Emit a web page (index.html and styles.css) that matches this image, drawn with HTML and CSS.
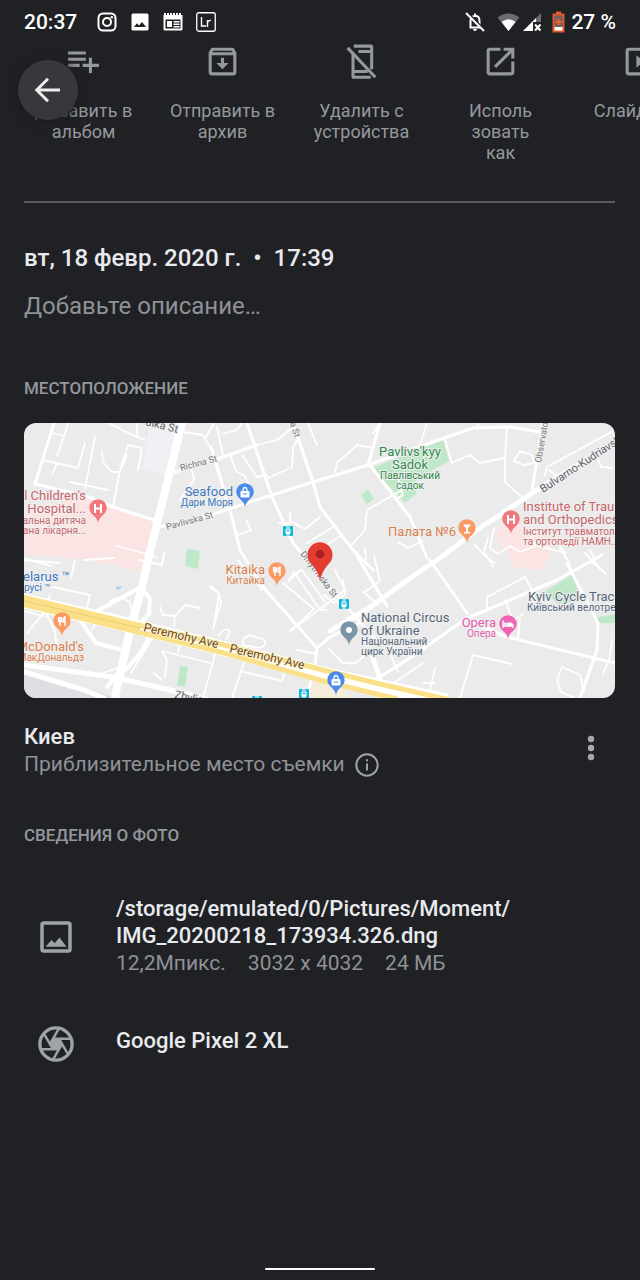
FILE: index.html
```html
<!DOCTYPE html>
<html lang="ru">
<head>
<meta charset="utf-8">
<meta name="viewport" content="width=device-width, initial-scale=1">
<title>Сведения о фото</title>
<link rel="stylesheet" href="styles.css">
</head>
<body>
<div class="screen">
  <header class="status">
    <span class="clock">20:37</span>
    <div class="notices">
      <svg class="s20" viewBox="0 0 20 20"><rect x="1.5" y="1.5" width="17" height="17" rx="4.5" fill="none" stroke="#fff" stroke-width="2"/><circle cx="10" cy="10" r="4" fill="none" stroke="#fff" stroke-width="2"/><circle cx="14.8" cy="5.2" r="1.3" fill="#fff"/></svg>
      <svg class="s20" viewBox="0 0 20 20"><path fill="#fff" fill-rule="evenodd" d="M3 1.500h14q1.500 0 1.500 1.500v14q0 1.500-1.500 1.500H3q-1.500 0-1.500-1.500V3q0-1.500 1.500-1.500zM4 15h12l-4-5-3 3.500-2-2.300z"/></svg>
      <svg class="s20" viewBox="0 0 20 20"><path fill="#fff" fill-rule="evenodd" d="M.5 3h19v14q0 1.500-1.500 1.500H2q-1.500 0-1.500-1.500zM2.500 7.500v9h15v-9z"/><path d="M1 2h18" stroke="#fff" stroke-width="2" stroke-dasharray="2 1"/><path fill="#fff" d="M4 9h5v6H4zM10.500 9h6v1.500h-6zM10.500 11.500h6V13h-6zM10.500 14h6v1.500h-6z"/></svg>
      <svg class="s20" viewBox="0 0 20 20"><rect x=".75" y=".75" width="18.500" height="18.500" rx="2" fill="none" stroke="#fff" stroke-width="1.300"/><path d="M5.500 5v9H10M11.500 15V8M11.500 10.500Q12.500 8 15 8.500" fill="none" stroke="#fff" stroke-width="1.400"/></svg>
    </div>
    <div class="system">
      <svg class="s20 bell" viewBox="0 0 20 20"><path d="M4.500 15.500h11M5.500 15V9Q5.500 4.500 10 4t4.500 5v6" fill="none" stroke="#fff" stroke-width="2"/><path d="M9 1.500h2V4H9zM8 17h4q-.3 2-2 2t-2-2z" fill="#fff"/><path d="M2.500.5l17 17.500" stroke="#202125" stroke-width="2"/><path d="M1 1l18 18" stroke="#fff" stroke-width="2"/></svg>
      <svg class="wifi" viewBox="0 0 23 20"><path d="M.5 5.500Q11.500-2.500 22.500 5.500L11.500 19z" fill="#6b6c6f"/><path d="M4.500 10Q11.500 4.500 18.500 10l-7 9z" fill="#fff"/></svg>
      <svg class="s20" viewBox="0 0 20 20"><path d="M19 1v18H1z" fill="#6b6c6f"/><path d="M14 6v5h-2v8H1z" fill="#fff"/><path d="M11 10h9v10h-9z" fill="#202125"/><path d="M13 12.500l5.500 6M18.500 12.500l-5.500 6" stroke="#fff" stroke-width="2"/></svg>
      <svg class="battery" viewBox="0 0 13 22"><path d="M4 .5h5v2h3.500V21.500H.5V2.500H4z" fill="#e2592f"/><path d="M2.500 4.500h8V16h-8z" fill="#6f6260"/><path d="M2.500 16h8v3.500h-8z" fill="#fff"/><path d="M6.500 8v6M3.500 11h6" stroke="#f0622f" stroke-width="2"/></svg>
      <span class="charge">27&nbsp;%</span>
    </div>
  </header>

  <button class="back" aria-label="Назад"><svg viewBox="0 0 24 24"><path d="M20 12H5M12 4.500L4.500 12l7.500 7.500" fill="none" stroke="#eceded" stroke-width="2"/></svg></button>

  <nav class="actions">
    <button class="action"><svg viewBox="0 0 24 24"><path fill="currentColor" d="M13.500 9.500H2v2h11.500zM13.500 5.500H2v2h11.500zM17.500 13.500v-4h-2v4h-4v2h4v4h2v-4h4.500v-2zM2 15.500h7.500v-2H2z"/></svg><span>Добавить в<br>альбом</span></button>
    <button class="action"><svg viewBox="0 0 24 24"><path fill="none" stroke="currentColor" stroke-width="2" stroke-linejoin="round" d="M4 6.500V19q0 1 1 1h14q1 0 1-1V6.500L18.500 4h-13zM4 7h16"/><path fill="currentColor" d="M11 9.500h2V13h3l-4 4-4-4h3z"/></svg><span>Отправить в<br>архив</span></button>
    <button class="action"><svg viewBox="0 0 24 24"><path fill="none" stroke="currentColor" stroke-width="2" d="M7 2h11q.6 0 .6.6V17M10 5.500h8M6.500 7v14.500q0 .7.7.7H18M7 18.500h9"/><path stroke="currentColor" stroke-width="2" d="M3 3.200l18 19"/></svg><span>Удалить с<br>устройства</span></button>
    <button class="action"><svg viewBox="0 0 24 24"><path fill="currentColor" d="M19 19H5V5h7V3H5a2 2 0 0 0-2 2v14a2 2 0 0 0 2 2h14c1.100 0 2-.9 2-2v-7h-2v7zM14 3v2h3.590l-9.830 9.830 1.410 1.410L19 6.410V10h2V3h-7z"/></svg><span>Исполь<br>зовать<br>как</span></button>
    <button class="action"><svg viewBox="0 0 24 24"><path fill="none" stroke="currentColor" stroke-width="2" d="M5 4h14q1 0 1 1v14q0 1-1 1H5q-1 0-1-1V5q0-1 1-1z"/><path fill="currentColor" d="M10 8v8l5-4z"/></svg><span>Слайд-шоу</span></button>
  </nav>

  <main class="details">
    <hr class="rule">
    <h1 class="date">вт, 18 февр. 2020 г. &nbsp;•&nbsp; 17:39</h1>
    <input class="description" type="text" placeholder="Добавьте описание…" aria-label="Описание">

    <h2 class="section">МЕСТОПОЛОЖЕНИЕ</h2>
    <svg class="map" viewBox="24 423 591 275" role="img" aria-label="Карта: Киев">
      <rect x="24" y="423" width="591" height="275" fill="#ebebec"/>
      <path fill="#f0f1f4" d="M150 423h28l-12 52-23-5z"/>
      <path fill="#fbe5e4" d="M24 512l62-16 70 25-10 53-34-9-48-8-40-3zM492 532l20-12 20 12 20 6-2 18-8 14-28-2-6-16z"/>
      <path fill="#bfe8c8" d="M372 468l71-28 6 21-32 18-6 6 6 8-12 10zM545 591l27-16 9 24-22 6zM594 618l21-4v9l-17 0zM361 495l7-6 6 10-7 5zM187 549l13 2-2 18-13-3zM180 666l8 1-3 20-8-2z"/>
      <path fill="#dddfe2" d="M24 674l76 18 14 6H24z"/>
      <path fill="#f5edda" d="M312 684l20-5 20 19h-43z"/>
      <path fill="#a8cff5" d="M116 587l6-1-2 3-4 1z"/>
      <g fill="none" stroke="#fff" stroke-linejoin="round" stroke-linecap="round">
        <g stroke-width="1.800">
          <path d="M43 460l35 8 7-25M52 433l12 3 4-13M64 436l-7 20M53 473l4-10M95 437l-10 51M70 482l38 8M113 507l7-37 8-25 14 3-4 22M102 452l1 10 9 10h8M127 455l-5 12M108 423l29 14v-14M137 437l8 3M183 432l20 3 14 25M206 437l8-14M192 470l2 10-6 8-8 12M117 546l30 8 10 4"/>
          <path d="M217 427l6 28M223 434l14-4 5-7M230 455l6 16 9 5 5 12M268 478l24-11 1-20 6-10M257 445l20-5 15-12M242 455l15 22 10-2M284 420l13 3M308 423l9 22M335 472l2-9 20-18 16 3M380 423l-7 10"/>
          <path d="M238 535l13-5-5-10M279 523h11l0-10M290 521l15 8 15-12M307 543l26-16M314 553l28-18M366 560l-1-12M350 547l15-17 2-20 40-23M395 500l8-5-6-20M398 542l10 6 15-7"/>
          <path d="M445 440l7 23 18-8 10 8 25-5 2-31M505 458v24l18 16M514 461l10 4 10-2-2-8-12-4zM545 475l2-8 66-36M597 457l4 10 11 1M480 415l-3 14M427 423l-7 22M549 470l10 8"/>
          <path d="M488 538l-4 14 9 14M494 528l-4 20 8 6 12-8 10 6 15-6-4-10M535 545l30 8M565 553l-10-14M475 545l12 13 8 5M585 553l20 20M560 548l10 16"/>
          <path d="M487 610v-13l38-20 7 13M505 600l8 20 10-6M520 619l-2 20M460 698l13-43 39 9M435 668l-7 30M423 683h12M562 667l18 8 4 16M562 667l-5 13 4 12 14 6M612 640l-3 20-6 14M590 560l16 14M595 560l-5-10"/>
          <path d="M53 587l37 8-3 12M50 595l-5 16 10 20 2 18M45 611l-18 22M24 611l20 5M52 566l-30-8M84 560l30-2M160 607l3 8 12 1 10-11 15 3M175 616l-1 10M211 586l8 8-5 30M215 655l-12 43M178 653l2-9M165 677l2-17-5-9 48 12M153 637l-22 36M24 560l36 3M140 560l22 5 2-12M75 560l-4 18M162 680l-8-7"/>
          <path d="M210 588l8 4 3 10-8 27M290 580l10-10M288 582l6-10 26 38 6 0M302 570l23 32M312 569l28 36M283 583l31 26-24 22M292 630l53-40-10-20M324 595l10 8 11-9-2-14M297 650l20 4M240 671l42 10 3-10M232 698l12-35M243 640q4-6 10-4l12 4q2 6-6 8l-16-3zM219 635q5-8 11-4l-3 8M328 648l15 15 12 0 17-12M363 593l17-12-6-25M376 603l-11-10M238 560l24 30"/>
          <path d="M110 601q10-6 18 0 6 6 2 16l-4 10M92 630q2-8 12-6l22 8M91 634l5 8 27 8-3 20M103 673l18-6M118 690l3-20M384 640l14 32M395 682l28-19"/>
        </g>
        <g stroke-width="3">
          <path d="M54 423L35 484l51 12 27 11 44 14M175 472l45-14 37-13M247 423l25 74 21 46 51 61 35 39M293 423l20 59 7 25 33 43 20 20M211 447l19 63 10 40 23 37 54 61M155 528l55-13 103-33 55-17 79-28 26-9 37-1 30 5M368 465l12-42M370 465l40 52 17 41M357 556l30 50M430 560l37 53M567 563l31 60-1 27-17 48M467 620l40 17 108 26M375 680l35-22 57-40 20-8 70-30 45-25M543 423l-11 67M317 648l-3 24-8 26M317 648l13-11 30-14"/>
        </g>
        <g stroke-width="4"><path d="M141 587l-49 27M141 587l9 12-1 15-12 12M78 617l18 26 27 7 1 15-17 22M150 633q-6 20-28 40"/></g>
        <path stroke-width="5" d="M615 442l-78 48-60 40-37 28-30 20-38 28-42 25M24 665l89 12 70 16 34 9M24 672l60 18 20 8M376 680l4 18M370 650l17 48"/>
        <path stroke-width="8" d="M182 423l-34 137-6 27-11 40-14 60-2 11"/>
      </g>
      <g fill="none">
        <path stroke="#fff" stroke-width="15" d="M20 600l117 27 80 20 110 28 120 26"/>
        <path stroke="#fbe08a" stroke-width="12" d="M20 600l120 29"/>
        <path stroke="#fbe08a" stroke-width="5" d="M134 624l86 20 107 27 53 13 70 16M134 631l86 21 107 30 70 17"/>
        <path stroke="#f0cd6c" stroke-width="1" d="M20 600l120 28"/>
      </g>

      <g class="map-text road">
        <text x="145" y="425" transform="rotate(14 145 425)">ulka St</text>
        <text class="minor" x="181" y="471" transform="rotate(-15 181 471)">Richna St</text>
        <text class="minor" x="167" y="530" transform="rotate(-15 167 530)">Pavlivska St</text>
        <text class="minor" x="290" y="423" transform="rotate(73 290 423)">a St</text>
        <text class="minor" x="300" y="554" transform="rotate(53 300 554)">Dmytrivska St</text>
        <text class="minor" x="541" y="463" transform="rotate(-80 541 463)">Observatorna</text>
        <text x="543" y="493" transform="rotate(-33 543 493)">Bulvarno-Kudriavska</text>
        <text class="avenue" x="143" y="631" transform="rotate(13 143 631)">Peremohy Ave</text>
        <text class="avenue" x="229" y="652" transform="rotate(13 229 652)">Peremohy Ave</text>
        <text x="174" y="698" transform="rotate(12 174 698)">Zhylianska St</text>
      </g>

      <g class="map-text rose">
        <text class="end" x="86" y="500">l Children's</text><text class="end" x="86" y="513">l Hospital...</text>
        <text class="end local" x="86" y="524">альна дитяча</text><text class="end local" x="86" y="534">ана лікарня...</text>
        <text x="523" y="511">Institute of Trauma</text><text x="523" y="524">and Orthopedics</text>
        <text class="local" x="523" y="535">Інститут травматології</text><text class="local" x="523" y="545">та ортопедії НАМН...</text>
      </g>
      <g class="map-text blue">
        <text class="end" x="233" y="496">Seafood</text><text class="end local" x="233" y="506">Дари Моря</text>
        <text x="23" y="581">elarus ™</text><text class="local" x="24" y="591">русі ™</text>
      </g>
      <g class="map-text orange">
        <text class="end" x="456" y="536">Палата №6</text>
        <text class="end" x="265" y="574">Kitaika</text><text class="end local" x="265" y="584">Китайка</text>
        <text class="end" x="84" y="651">McDonald's</text><text class="end local" x="84" y="661">МакДональдз</text>
      </g>
      <g class="map-text green">
        <text class="mid" x="410" y="456">Pavlivs'kyy</text><text class="mid" x="410" y="469">Sadok</text>
        <text class="mid local" x="410" y="479">Павлівський</text><text class="mid local" x="410" y="489">садок</text>
      </g>
      <g class="map-text slate">
        <text x="361" y="622">National Circus</text><text x="361" y="635">of Ukraine</text>
        <text class="local" x="361" y="645">Національний</text><text class="local" x="361" y="655">цирк України</text>
        <text x="528" y="601">Kyiv Cycle Track</text><text class="local" x="527" y="611">Київський велотрек</text>
      </g>
      <g class="map-text pink">
        <text class="end" x="496" y="627">Opera</text><text class="end local" x="496" y="637">Опера</text>
      </g>

      <defs>
        <path id="pin" d="M0 12Q-1 7-5 4A8.700 8.700 0 1 1 5 4Q1 7 0 12z"/>
        <g id="fork" fill="none" stroke="#fff" stroke-width="1.400"><path d="M-3.500-7v3q0 2 1.500 2t1.500-2v-3M-2-7V2M3 2v-9q-2 1-2 5h2"/></g>
        <g id="bag"><rect x="-4.500" y="-4" width="9" height="6.500" rx="1" fill="#fff"/><path d="M-2-4q0-3.500 2-3.500T2-4" fill="none" stroke="#fff" stroke-width="1.300"/><path d="M-2-1.500q2 2 4 0" fill="none" stroke="#4a8bea"/></g>
        <g id="cross" fill="none" stroke="#fff" stroke-width="2"><path d="M-3-7V2M3-7V2M-3-2.500h6"/></g>
        <g id="tram"><rect x="-5" y="-5" width="10" height="10" rx="1" fill="#10b5dc"/><rect x="-2.500" y="-2.500" width="5" height="5.500" rx="1" fill="#fff"/><path d="M-1.500-.5h3" stroke="#10b5dc" stroke-width="1.500"/><path d="M-2-4h4M-2 4h4" stroke="#fff"/></g>
      </defs>
      <g transform="translate(98 511)"><use href="#pin" fill="#f0777b"/><use href="#cross"/></g>
      <g transform="translate(511 522)"><use href="#pin" fill="#f0777b"/><use href="#cross"/></g>
      <g transform="translate(245 495)"><use href="#pin" fill="#4a8bea"/><use href="#bag"/></g>
      <g transform="translate(336 683)"><use href="#pin" fill="#4a8bea"/><use href="#bag"/></g>
      <g transform="translate(277 574)"><use href="#pin" fill="#fb9b63"/><use href="#fork"/></g>
      <g transform="translate(62 624)"><use href="#pin" fill="#fb9b63"/><use href="#fork"/></g>
      <g transform="translate(467 531)"><use href="#pin" fill="#fb9b63"/><path d="M-4-6.500h8L1-2.500V1h2v1.500h-6V1h2v-3.500z" fill="#fff"/></g>
      <g transform="translate(349 633)"><use href="#pin" fill="#7896a8"/><circle cy="-3" r="3" fill="#fff"/></g>
      <g transform="translate(508 627)"><use href="#pin" fill="#f066b4"/><path d="M-5-6.500V1M-5-1h10V1M-1-2.800h4.500q1.500 0 1.500 2" fill="none" stroke="#fff" stroke-width="1.400"/><path d="M-1.500-4.500h4q2.500 0 2.500 3.500h-6.500z" fill="#fff"/><circle cx="-3.200" cy="-3.300" r="1.300" fill="#fff"/></g>
      <use href="#tram" x="288" y="531"/><use href="#tram" x="344" y="604"/><use href="#tram" x="304" y="694"/><use href="#tram" x="257" y="701"/>
      <path fill="#e43c30" d="M320 580Q318 571 311 563.500A12.500 12.500 0 1 1 329 563.500Q322 571 320 580z"/>
      <circle cx="320" cy="554" r="4.300" fill="#a8201c"/>
    </svg>

    <section class="place">
      <div class="place-text">
        <p class="title">Киев</p>
        <p class="sub">Приблизительное место съемки
          <svg class="info" viewBox="0 0 24 24"><circle cx="12" cy="12" r="10.700" fill="none" stroke="currentColor" stroke-width="2"/><path d="M12 6.300v2M12 10.500v7" stroke="currentColor" stroke-width="2"/></svg>
        </p>
      </div>
      <button class="more" aria-label="Ещё"><svg viewBox="0 0 8 28" fill="currentColor"><circle cx="4" cy="5" r="3.200"/><circle cx="4" cy="14" r="3.200"/><circle cx="4" cy="23" r="3.200"/></svg></button>
    </section>

    <h2 class="section info-title">СВЕДЕНИЯ О ФОТО</h2>
    <ul class="facts">
      <li class="fact">
        <svg class="fact-icon" viewBox="0 0 24 24"><rect x="4" y="4" width="16" height="16" rx="1" fill="none" stroke="currentColor" stroke-width="2"/><path fill="currentColor" d="M6 17.500h12l-4-5.200-2.800 3.200-1.700-1.800z"/></svg>
        <div>
          <p class="title">/storage/emulated/0/Pictures/Moment/<br>IMG_20200218_173934.326.dng</p>
          <p class="sub meta"><span>12,2Мпикс.</span><span>3032 x 4032</span><span>24 МБ</span></p>
        </div>
      </li>
      <li class="fact camera">
        <svg class="fact-icon" viewBox="-12 -12 24 24"><circle r="9.200" fill="none" stroke="currentColor" stroke-width="1.900"/><path fill="currentColor" d="M-1.800-3.200h3.600L3.700 0 1.800 3.200h-3.600L-3.700 0z"/><g stroke="currentColor" stroke-width="1.400"><path id="blade" d="M-1.800-3H8.800"/><use href="#blade" transform="rotate(60)"/><use href="#blade" transform="rotate(120)"/><use href="#blade" transform="rotate(180)"/><use href="#blade" transform="rotate(240)"/><use href="#blade" transform="rotate(300)"/></g></svg>
        <p class="title">Google Pixel 2 XL</p>
      </li>
    </ul>
  </main>
  <footer class="gesture"><span class="handle"></span></footer>
</div>
</body>
</html>
```

FILE: styles.css
```css
* { box-sizing: border-box; }
body { margin: 0; background: #202125; color: #e8eaed; font-family: Roboto, "Noto Sans", sans-serif; }
h1, h2, p, ul { margin: 0; padding: 0; font-weight: 400; }
button { border: 0; padding: 0; background: none; color: inherit; font: inherit; }
svg { display: block; flex: none; }

.screen { position: relative; display: flex; flex-direction: column; min-height: 100vh; overflow: hidden; }

.status { display: flex; align-items: center; height: 43px; padding: 0 24px; color: #fff; font-size: 21px; font-weight: 500; }
.notices { display: flex; gap: 13px; margin-left: 20px; }
.system { display: flex; align-items: center; margin-left: auto; }
.s20 { width: 20px; height: 20px; }
.bell { margin-right: 12px; }
.wifi { width: 23px; height: 20px; margin-right: 2px; }
.battery { width: 13px; height: 22px; margin: 0 6px 0 10px; }

.back { position: absolute; left: 18px; top: 60px; display: grid; place-items: center; width: 60px; height: 60px; border-radius: 50%; background: #37383b; box-shadow: 0 1px 8px 2px #1b1c1f; }
.back svg { width: 36px; height: 36px; }

.actions { display: flex; padding-left: 14px; color: #95989c; }
.action { display: flex; flex: 0 0 139px; flex-direction: column; align-items: center; gap: 20px; font-size: 18px; line-height: 21px; text-align: center; white-space: nowrap; }
.action svg { width: 37px; height: 37px; }

.details { padding: 38px 25px 0 24px; }
.rule { height: 2px; margin: 0 0 41px; border: 0; background: #5c5d60; }
.date { font-size: 24px; font-weight: 500; line-height: 28px; }
.description { display: block; width: 100%; height: 32px; margin: 18px 0 56px; padding: 0; border: 0; background: none; color: #e8eaed; font: 400 24px/32px Roboto, "Noto Sans", sans-serif; }
.description::placeholder { color: #8f9296; opacity: 1; }
.section { color: #94979b; font-size: 17px; font-weight: 500; line-height: 20px; }

.map { width: 100%; height: auto; margin: 25px 0; border-radius: 12px; }
.map-text { font: 400 13px Roboto, "Noto Sans", sans-serif; paint-order: stroke; stroke: #f0f0f0; stroke-width: 2px; stroke-linejoin: round; }
.map-text .local { font-size: 10px; }
.end { text-anchor: end; }
.mid { text-anchor: middle; }
.road { fill: #5f6368; font-size: 11px; }
.road .minor { fill: #77797c; font-size: 9px; }
.road .avenue { fill: #6b4a2c; font-size: 12px; stroke: #fbeebf; }
.rose { fill: #c8656b; }
.blue { fill: #3f78bd; }
.orange { fill: #d9804f; }
.green { fill: #318a4e; }
.slate { fill: #56687a; }
.pink { fill: #e35cab; }

.place { display: flex; justify-content: space-between; align-items: center; }
.title { font-size: 22px; font-weight: 500; line-height: 27px; }
.sub { display: flex; align-items: center; gap: 10px; color: #8f9296; font-size: 21px; line-height: 29px; }
.info { width: 24px; height: 24px; color: #a0a3a7; }
.more { padding: 0 20px; margin-bottom: 6px; color: #a5a8ac; }
.more svg { width: 8px; height: 28px; }

.info-title { margin: 46px 0 50px; }
.facts { display: flex; flex-direction: column; gap: 45px; list-style: none; }
.fact { display: flex; align-items: center; gap: 39px; padding-left: 11px; }
.fact-icon { width: 42px; height: 42px; color: #9fa2a6; }
.meta { gap: 22px; }
.camera .title { padding-bottom: 8px; }

.gesture { display: flex; justify-content: center; margin-top: auto; padding: 24px 0 10px; }
.handle { width: 110px; height: 2px; border-radius: 1px; background: #fff; }
```
